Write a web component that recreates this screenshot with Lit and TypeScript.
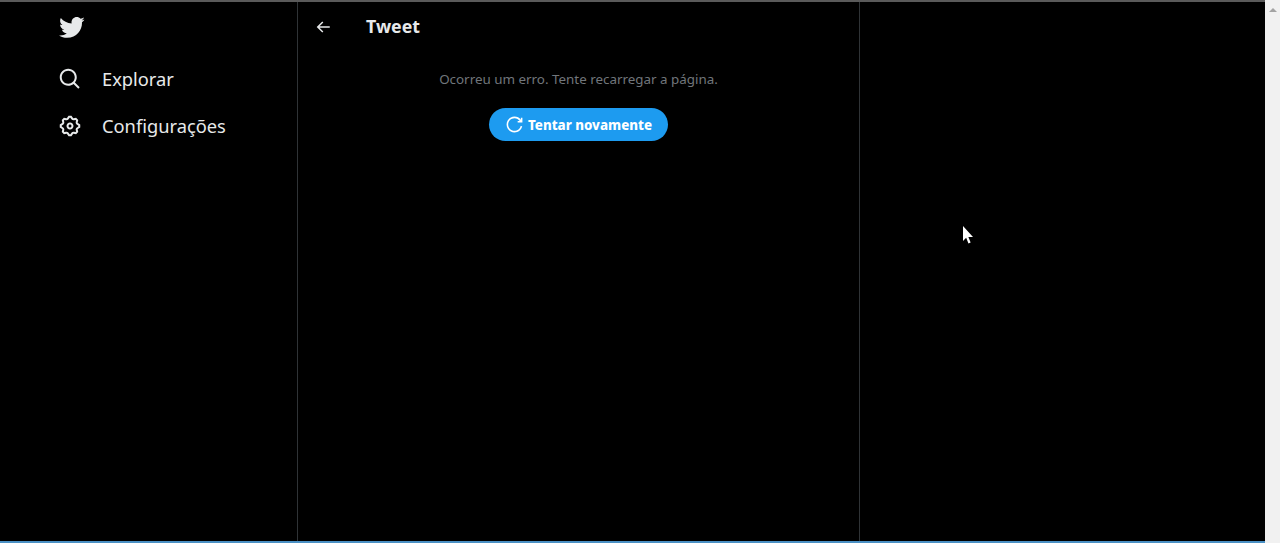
import { LitElement, html, css, svg } from "lit";
import { customElement } from "lit/decorators.js";

const icon = (cls: string, d: string) =>
  html`<svg class=${cls} viewBox="0 0 24 24" aria-hidden="true">${svg`<path d=${d}></path>`}</svg>`;

const BIRD = "M23.643 4.937c-.835.37-1.732.62-2.675.733.962-.576 1.7-1.49 2.048-2.578-.9.534-1.897.922-2.958 1.13-.85-.904-2.06-1.47-3.4-1.47-2.572 0-4.658 2.086-4.658 4.66 0 .364.042.718.12 1.06-3.873-.195-7.304-2.05-9.602-4.868-.4.69-.63 1.49-.63 2.342 0 1.616.823 3.043 2.072 3.878-.764-.025-1.482-.234-2.11-.583v.06c0 2.257 1.605 4.14 3.737 4.568-.392.106-.803.162-1.227.162-.3 0-.593-.028-.877-.082.593 1.85 2.313 3.198 4.352 3.234-1.595 1.25-3.604 1.995-5.786 1.995-.376 0-.747-.022-1.112-.065 2.062 1.323 4.51 2.093 7.14 2.093 8.57 0 13.255-7.098 13.255-13.254 0-.2-.005-.402-.014-.602.91-.658 1.7-1.477 2.323-2.41z";
const SEARCH = "M10.25 3.75c-3.59 0-6.5 2.91-6.5 6.5s2.91 6.5 6.5 6.5c1.795 0 3.419-.726 4.596-1.904 1.178-1.177 1.904-2.801 1.904-4.596 0-3.59-2.91-6.5-6.5-6.5zm-8.5 6.5c0-4.694 3.806-8.5 8.5-8.5s8.5 3.806 8.5 8.5c0 1.986-.682 3.815-1.824 5.262l4.781 4.781-1.414 1.414-4.781-4.781c-1.447 1.142-3.276 1.824-5.262 1.824-4.694 0-8.5-3.806-8.5-8.5z";
const GEAR = "M10.54 1.75h2.92l1.57 2.36c.11.17.32.25.53.21l2.53-.59 2.17 2.17-.58 2.54c-.05.2.04.41.21.53l2.36 1.57v2.92l-2.36 1.57c-.17.12-.26.33-.21.53l.58 2.54-2.17 2.17-2.53-.59c-.21-.04-.42.04-.53.21l-1.57 2.36h-2.92l-1.58-2.36c-.11-.17-.32-.25-.52-.21l-2.54.59-2.17-2.17.58-2.54c.05-.2-.03-.41-.21-.53l-2.35-1.57v-2.92L4.1 8.97c.18-.12.26-.33.21-.53L3.73 5.9 5.9 3.73l2.54.59c.2.04.41-.04.52-.21l1.58-2.36zm1.07 2l-.98 1.47C10.05 6.08 9 6.5 7.99 6.27l-1.46-.34-.6.6.33 1.47c.24 1-.18 2.05-1.05 2.64l-1.46.98v.78l1.46.98c.87.59 1.29 1.64 1.05 2.64l-.33 1.47.6.6 1.46-.34c1.01-.23 2.06.19 2.64 1.05l.98 1.47h.78l.97-1.47c.59-.86 1.64-1.28 2.65-1.05l1.46.34.6-.6-.33-1.47c-.24-1 .18-2.05 1.05-2.64l1.47-.98v-.78l-1.47-.98c-.87-.59-1.29-1.64-1.05-2.64l.33-1.47-.6-.6-1.46.34c-1.01.23-2.06-.19-2.65-1.05l-.97-1.47h-.78zM12 10.5c-.83 0-1.5.67-1.5 1.5s.67 1.5 1.5 1.5 1.5-.67 1.5-1.5-.67-1.5-1.5-1.5zM8.5 12c0-1.93 1.57-3.5 3.5-3.5s3.5 1.57 3.5 3.5-1.57 3.5-3.5 3.5-3.5-1.57-3.5-3.5z";
const ARROW = "M7.414 13l5.043 5.04-1.414 1.42L3.586 12l7.457-7.46 1.414 1.42L7.414 11H21v2H7.414z";
const RETRY = "M12 4c-4.418 0-8 3.58-8 8s3.582 8 8 8c3.806 0 6.993-2.66 7.802-6.22l1.95.44C20.742 18.67 16.76 22 12 22 6.477 22 2 17.52 2 12S6.477 2 12 2c3.272 0 6.176 1.57 8 4V3.5h2v6h-6v-2h2.616C17.175 5.39 14.749 4 12 4z";

@customElement("app-root")
export class AppRoot extends LitElement {
  static styles = css`
    :host {
      display: flex;
      position: relative;
      width: 1280px;
      height: 543px;
      overflow: hidden;
      background: #000;
      font-family: "Noto Sans", "Open Sans", sans-serif;
      color: #e7e9ea;
    }
    svg { fill: currentColor; display: block; flex: none; }
    .window { flex: 1; display: flex; flex-direction: column; min-width: 0; }
    .topline { height: 2px; background: #5a5a5a; flex: none; }
    .bottomline { height: 2px; background: #4a90c4; flex: none; }
    .columns { flex: 1; display: flex; min-height: 0; }
    .nav { width: 297px; flex: none; padding: 12px 0 0 58px; box-sizing: border-box; }
    .logo { width: 27px; height: 27px; color: #e7e9ea; margin-bottom: 14px; }
    .nav-item { display: flex; align-items: center; height: 47px; font-size: 18.3px; gap: 20px; }
    .nav-icon { width: 24px; height: 24px; }
    .main {
      width: 561px;
      flex: none;
      border-left: 1px solid #2f3336;
      border-right: 1px solid #2f3336;
    }
    .head { display: flex; align-items: center; height: 50px; padding-left: 16px; gap: 34px; }
    .back { width: 18px; height: 18px; }
    .title { font-size: 17.75px; font-weight: 700; line-height: 22px; margin-bottom: 2px; }
    .error { display: flex; flex-direction: column; align-items: center; padding-top: 16px; gap: 18px; }
    .message { font-size: 13.4px; line-height: 22px; color: #71767b; }
    .retry {
      display: flex;
      align-items: center;
      gap: 4px;
      height: 33px;
      width: 179px;
      justify-content: center;
      border-radius: 17px;
      background: #1d9bf0;
      color: #fff;
      font-size: 13.3px;
      font-weight: 800;
    }
    .retry-icon { width: 19px; height: 19px; }
    .scrollbar { width: 15px; flex: none; background: #f1f1f1; display: flex; justify-content: center; padding-top: 8px; box-sizing: border-box; }
    .scroll-up { width: 0; height: 0; border-left: 4px solid transparent; border-right: 4px solid transparent; border-bottom: 4px solid #a3a3a3; }
    .cursor { position: absolute; left: 963px; top: 226px; width: 10px; height: 18px; color: #fff; }
  `;

  render() {
    return html`
      <div class="window">
        <div class="topline"></div>
        <div class="columns">
          <nav class="nav">
            ${icon("logo", BIRD)}
            <div class="nav-item">${icon("nav-icon", SEARCH)}<span>Explorar</span></div>
            <div class="nav-item">${icon("nav-icon", GEAR)}<span>Configurações</span></div>
          </nav>
          <main class="main">
            <div class="head">
              ${icon("back", ARROW)}
              <span class="title">Tweet</span>
            </div>
            <div class="error">
              <div class="message">Ocorreu um erro. Tente recarregar a página.</div>
              <div class="retry">${icon("retry-icon", RETRY)}<span>Tentar novamente</span></div>
            </div>
          </main>
        </div>
        <div class="bottomline"></div>
      </div>
      <div class="scrollbar"><div class="scroll-up"></div></div>
      <svg class="cursor" viewBox="0 0 11 18" preserveAspectRatio="none" aria-hidden="true"><path d="M0 0v15l3.5-3.3L6 17.5l2.4-1-2.5-5.6H11z"></path></svg>
    `;
  }
}
